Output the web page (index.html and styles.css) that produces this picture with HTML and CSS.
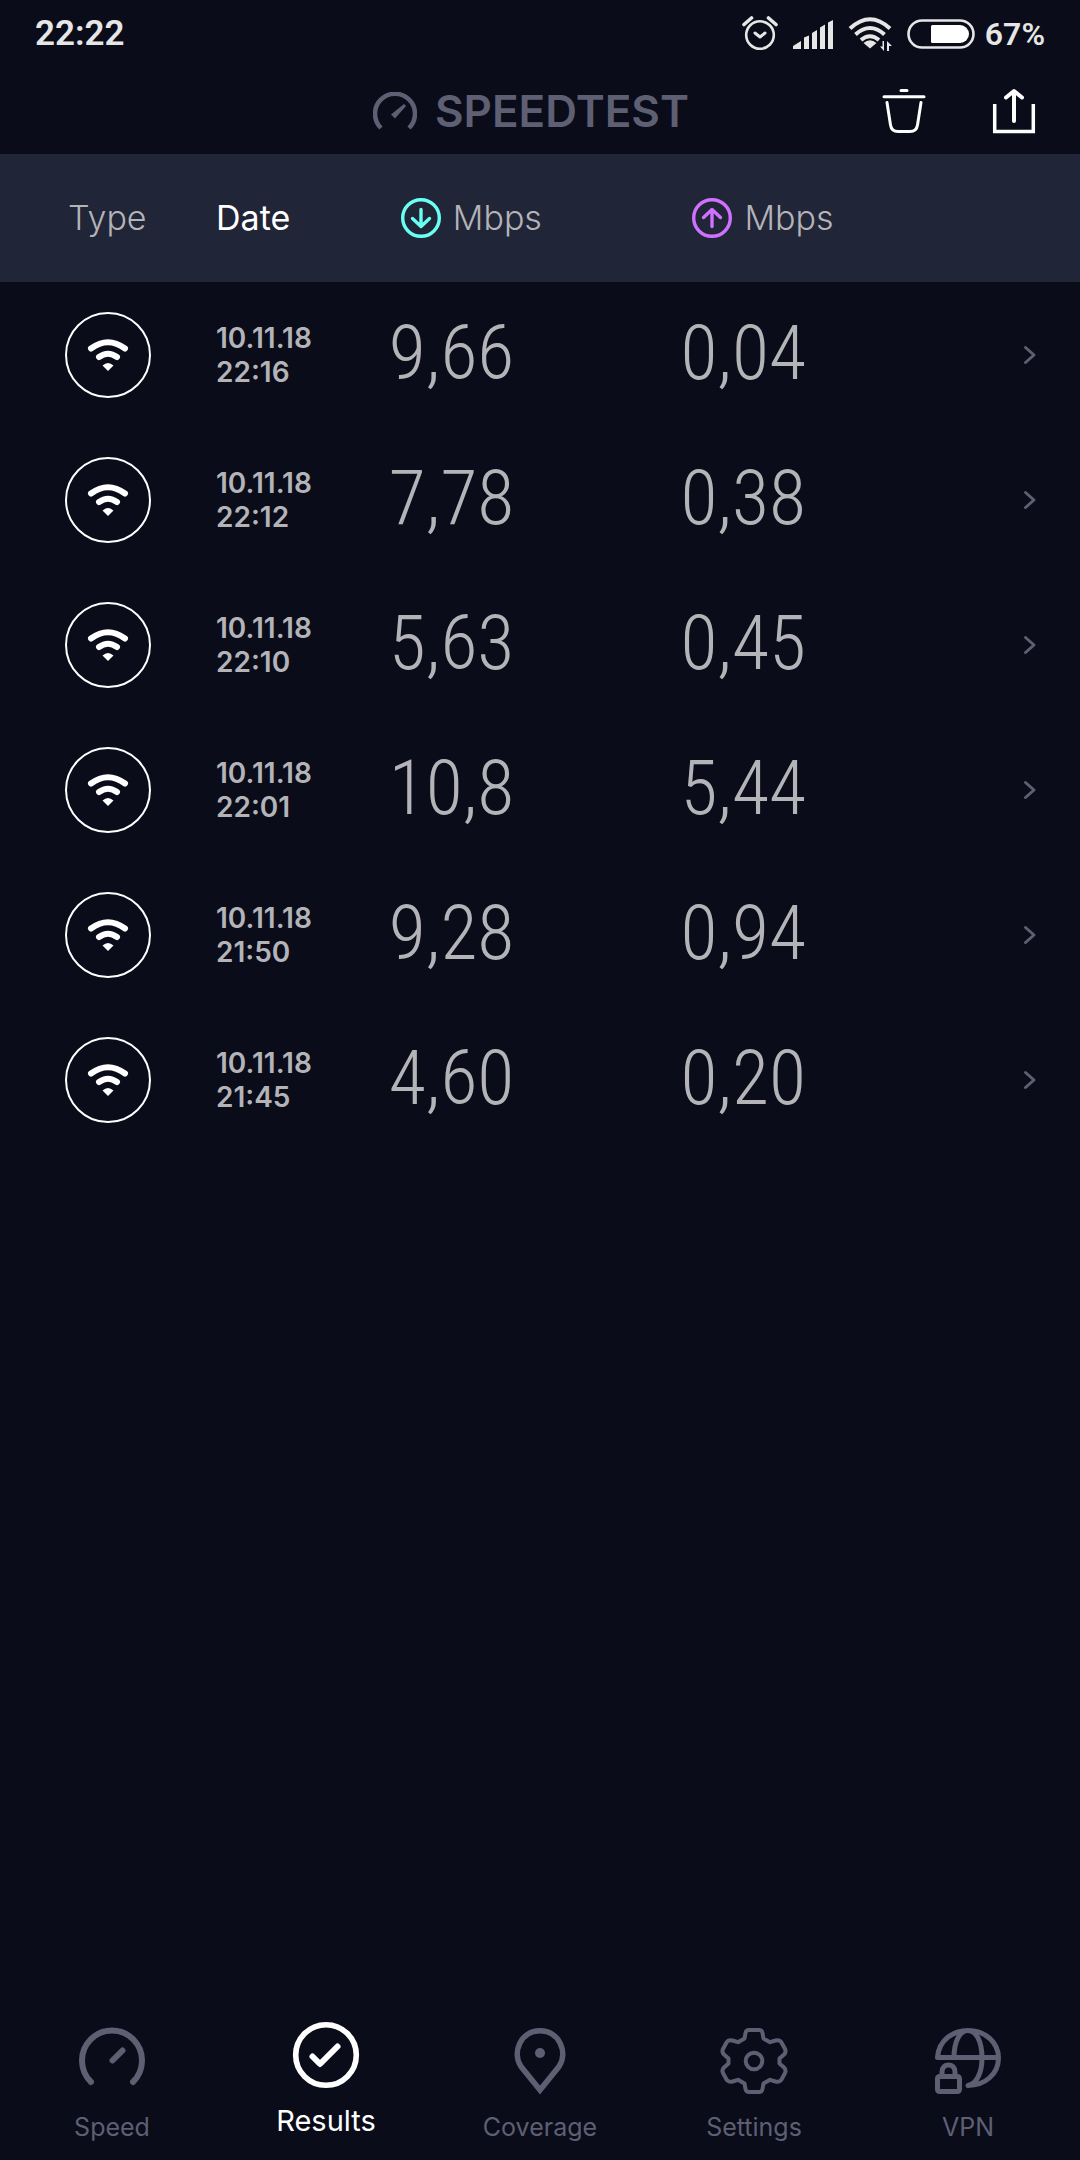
FILE: index.html
```html
<!DOCTYPE html>
<html lang="en">
<head>
<meta charset="utf-8">
<meta name="viewport" content="width=device-width, initial-scale=1">
<title>Speedtest – Results</title>
<link rel="stylesheet" href="styles.css">
</head>
<body>
<svg class="sprite" aria-hidden="true">
  <symbol id="wifi" viewBox="0 0 42 34">
    <path d="M4 10.500Q21-2 38 10.500" fill="none" stroke="currentColor" stroke-width="6" stroke-linecap="round"/>
    <path d="M12 19Q21 12.500 30 19" fill="none" stroke="currentColor" stroke-width="6" stroke-linecap="round"/>
    <path d="M15.500 27.500Q21 22.500 26.500 27.500L21 33Z" fill="currentColor"/>
  </symbol>
  <symbol id="chevron" viewBox="0 0 14 20">
    <path d="M2.500 2.500L11 10L2.500 17.500" fill="none" stroke="currentColor" stroke-width="3" stroke-linecap="round" stroke-linejoin="round"/>
  </symbol>
</svg>
<div class="app">
  <div class="status">
    <time class="clock">22:22</time>
    <div class="status-icons">
      <svg width="36" height="36" viewBox="0 0 36 36" fill="none" stroke="currentColor" stroke-linecap="round">
        <circle cx="18" cy="19" r="13.800" stroke-width="2.600"/>
        <path d="M13 17L18 21L23 17" stroke-width="3" stroke-linejoin="round"/>
        <path d="M2 8.500L9.500 2M34 8.500L26.500 2" stroke-width="3.600"/>
      </svg>
      <svg class="signal" width="42" height="32" viewBox="0 0 42 32" fill="currentColor">
        <path d="M1 31V28L9 23V31ZM12 31V19.500L17 17.500V31ZM20 31V15L25 12V31ZM28 31V9.500L33 6.500V31ZM36 31V4.500L41 2V31Z"/>
      </svg>
      <svg class="net" width="44" height="36" viewBox="0 0 44 36" fill="none" stroke="currentColor">
        <path d="M2 12.500Q22-6 42 12.500M7.500 18.500Q22 5.500 36.500 18.500M13 24Q22 16.500 31 24" stroke-width="4"/>
        <path d="M15.500 27Q22 21.500 28.500 27L22 32.500Z" fill="currentColor" stroke="none"/>
        <path d="M36 25V35L32 30.500H34.500V25ZM39 35V25L44 30H41V35Z" fill="currentColor" stroke="none"/>
      </svg>
      <svg class="battery" width="68" height="30" viewBox="0 0 68 30">
        <rect x="1.500" y="1.500" width="65" height="27" rx="13.500" fill="none" stroke="currentColor" stroke-width="2.600"/>
        <path d="M25.500 6H53A9 9 0 0 1 53 24H25.500Q24 24 24 22.500V7.500Q24 6 25.500 6Z" fill="#fff"/>
      </svg>
      <span class="percent">67%</span>
    </div>
  </div>

  <header class="topbar">
    <h1 class="logo">
      <svg width="44" height="38" viewBox="0 0 44 38" aria-hidden="true">
        <path d="M8 36A20 20 0 1 1 36 36" fill="none" stroke="currentColor" stroke-width="4.500"/>
        <path d="M31 12L33 14L22 26.500L18 22.500Z" fill="currentColor"/>
      </svg>
      <span>SPEEDTEST</span>
    </h1>
    <div class="actions">
      <button type="button" aria-label="Delete results">
        <svg width="44" height="46" viewBox="0 0 44 46" fill="none" stroke="currentColor" stroke-width="3" stroke-linecap="round">
          <path d="M19 2.500H25M2 8.700H42M5 14.500L8.500 37Q9.500 43.500 16 43.500H28Q34.500 43.500 35.500 37L39 14.500"/>
        </svg>
      </button>
      <button type="button" aria-label="Share results">
        <svg width="44" height="46" viewBox="0 0 44 46" fill="none" stroke="currentColor" stroke-width="3.500">
          <path d="M2.700 16V43.500H41.300V16"/>
          <path d="M22 33V3.500M14 9.500L22 3L30 9.500" stroke-width="4" stroke-linecap="round" stroke-linejoin="round"/>
        </svg>
      </button>
    </div>
  </header>

  <main>
    <table class="results">
      <colgroup><col class="c-type"><col class="c-date"><col class="c-rate"><col class="c-rate"><col></colgroup>
      <thead>
        <tr>
          <th class="type" scope="col">Type</th>
          <th class="sorted" scope="col">Date</th>
          <th scope="col"><span class="unit down">
            <svg width="40" height="40" viewBox="0 0 40 40" role="img" aria-label="Download"><circle cx="20" cy="20" r="18.300"/><path d="M20 11.500V28M11.500 20.500L20 28.500L28.500 20.500"/></svg>
            <span>Mbps</span></span></th>
          <th scope="col"><span class="unit up">
            <svg width="40" height="40" viewBox="0 0 40 40" role="img" aria-label="Upload"><circle cx="20" cy="20" r="18.300"/><path d="M20 28.500V12M11.500 19.500L20 11.500L28.500 19.500"/></svg>
            <span>Mbps</span></span></th>
          <td></td>
        </tr>
      </thead>
      <tbody>
        <tr><td><span class="badge"><svg role="img" aria-label="Wi-Fi"><use href="#wifi"/></svg></span></td><td class="date">10.11.18<br>22:16</td><td class="rate">9,66</td><td class="rate">0,04</td><td class="more"><button type="button" aria-label="Details"><svg><use href="#chevron"/></svg></button></td></tr>
        <tr><td><span class="badge"><svg role="img" aria-label="Wi-Fi"><use href="#wifi"/></svg></span></td><td class="date">10.11.18<br>22:12</td><td class="rate">7,78</td><td class="rate">0,38</td><td class="more"><button type="button" aria-label="Details"><svg><use href="#chevron"/></svg></button></td></tr>
        <tr><td><span class="badge"><svg role="img" aria-label="Wi-Fi"><use href="#wifi"/></svg></span></td><td class="date">10.11.18<br>22:10</td><td class="rate">5,63</td><td class="rate">0,45</td><td class="more"><button type="button" aria-label="Details"><svg><use href="#chevron"/></svg></button></td></tr>
        <tr><td><span class="badge"><svg role="img" aria-label="Wi-Fi"><use href="#wifi"/></svg></span></td><td class="date">10.11.18<br>22:01</td><td class="rate">10,8</td><td class="rate">5,44</td><td class="more"><button type="button" aria-label="Details"><svg><use href="#chevron"/></svg></button></td></tr>
        <tr><td><span class="badge"><svg role="img" aria-label="Wi-Fi"><use href="#wifi"/></svg></span></td><td class="date">10.11.18<br>21:50</td><td class="rate">9,28</td><td class="rate">0,94</td><td class="more"><button type="button" aria-label="Details"><svg><use href="#chevron"/></svg></button></td></tr>
        <tr><td><span class="badge"><svg role="img" aria-label="Wi-Fi"><use href="#wifi"/></svg></span></td><td class="date">10.11.18<br>21:45</td><td class="rate">4,60</td><td class="rate">0,20</td><td class="more"><button type="button" aria-label="Details"><svg><use href="#chevron"/></svg></button></td></tr>
      </tbody>
    </table>
  </main>

  <nav class="tabs" aria-label="Main">
    <a href="#speed">
      <svg width="68" height="68" viewBox="0 0 68 68"><path d="M13 55A30 30 0 1 1 55 55M34.500 33.500L44.500 23.500" stroke-width="6"/></svg>
      <span>Speed</span>
    </a>
    <a href="#results" class="active" aria-current="page">
      <svg width="68" height="68" viewBox="0 0 68 68"><circle cx="34" cy="34" r="30.300" stroke-width="5.600"/><path d="M20.500 35.500L28 43L45.500 25.500" stroke-width="6"/></svg>
      <span>Results</span>
    </a>
    <a href="#coverage">
      <svg width="68" height="68" viewBox="0 0 68 68"><path d="M34 63L15 39.500C6 26 14 3.800 34 3.800S62 26 53 39.500Z" stroke-width="5.600" stroke-linejoin="miter"/><circle cx="34" cy="26" r="5" fill="currentColor" stroke="none"/></svg>
      <span>Coverage</span>
    </a>
    <a href="#settings">
      <svg width="68" height="68" viewBox="0 0 68 68"><path d="M29 3H39Q42 3 42.500 6L43.500 11.500L50 15.200L55.500 13.500Q59.500 12.500 61.500 15.500L65 22Q66.500 25 64 27.500L59.500 31.500V36.500L64 40.500Q66.500 43 65 46L61.500 52.500Q59.500 55.500 55.500 54.500L50 52.800L43.500 56.500L42.500 62Q42 65 39 65H29Q26 65 25.500 62L24.500 56.500L18 52.800L12.500 54.500Q8.500 55.500 6.500 52.500L3 46Q1.500 43 4 40.500L8.500 36.500V31.500L4 27.500Q1.500 25 3 22L6.500 15.500Q8.500 12.500 12.500 13.500L18 15.200L24.500 11.500L25.500 6Q26 3 29 3Z" stroke-width="4"/><circle cx="34" cy="34" r="8.300" stroke-width="4"/></svg>
      <span>Settings</span>
    </a>
    <a href="#vpn">
      <svg width="68" height="68" viewBox="0 0 68 68"><path d="M3.500 30.500C5 12 20 3.500 34 3.500C52 3.500 64.500 16 64.500 31C64.500 47 51 58.500 34 58.500C43 57 48 45 48 31C48 14 42 3.500 34 3.500S20 14 20 30.500M3.500 30.500H64" stroke-width="5"/><rect x="3.500" y="49.500" width="22" height="15" rx="2" stroke-width="5"/><path d="M8 49V45C8 35.500 21 35.500 21 45V49" stroke-width="5"/></svg>
      <span>VPN</span>
    </a>
  </nav>
</div>
</body>
</html>
```
FILE: styles.css
```css
:root {
  --bg: #0a0c1a;
  --panel: #212538;
  --text: #b4b4b8;
  --muted: #5e5f73;
}

* { box-sizing: border-box; }

body {
  margin: 0;
  background: var(--bg);
  color: #fff;
  font-family: Inter, "Open Sans", sans-serif;
}

.sprite { position: absolute; width: 0; height: 0; }

svg { display: block; flex: none; }

button {
  padding: 0;
  border: 0;
  background: none;
  color: inherit;
  font: inherit;
}

.app {
  display: flex;
  flex-direction: column;
  min-height: 100vh;
}

main { flex: 1; }

.status {
  display: flex;
  justify-content: space-between;
  align-items: center;
  height: 68px;
  padding: 0 35px;
  color: #e6e6e6;
  font: 600 35px/40px Roboto, sans-serif;
}

.status-icons { display: flex; align-items: center; }
.signal { margin-left: 14px; }
.net { margin-left: 14px; }
.battery { margin-left: 15px; }
.percent { margin-left: 10px; font-size: 32px; }

.topbar {
  display: grid;
  grid-template-columns: 1fr auto 1fr;
  align-items: center;
  height: 86px;
  padding: 0 44px 0 26px;
}

.logo {
  grid-column: 2;
  display: flex;
  align-items: center;
  gap: 18px;
  margin: 0;
  color: var(--muted);
  font-size: 44px;
  font-weight: 600;
  line-height: 48px;
}

.actions {
  display: flex;
  justify-content: flex-end;
  gap: 66px;
}

.results {
  width: 100%;
  border-collapse: collapse;
  table-layout: fixed;
}

.c-type { width: 20%; }
.c-date { width: 16%; }
.c-rate { width: 27%; }

.results th, .results td { padding: 0; text-align: left; }

.results thead { background: var(--panel); }

.results th {
  height: 128px;
  color: var(--text);
  font-size: 34px;
  font-weight: 300;
  line-height: 40px;
}

.results .type { padding-left: 68px; }
.results .sorted { color: #fff; font-weight: 400; }

.unit {
  display: flex;
  align-items: center;
  gap: 12px;
  padding-left: 12px;
}

.unit svg {
  fill: none;
  stroke: currentColor;
  stroke-width: 3.4;
  stroke-linecap: round;
  stroke-linejoin: round;
}

.down svg { color: #6afff3; }
.up svg { color: #cf70ff; }

.results tbody tr { height: 145px; }

.badge {
  display: flex;
  align-items: center;
  justify-content: center;
  width: 86px;
  height: 86px;
  margin: 0 auto;
  border: 2px solid #fff;
  border-radius: 50%;
}

.badge svg { width: 42px; height: 34px; }

.date {
  color: var(--text);
  font-size: 28px;
  font-weight: 600;
  line-height: 34px;
}

.rate {
  color: var(--text);
  font: 300 76px/96px "Roboto Condensed", "Liberation Sans Narrow", Roboto, sans-serif;
}

.results .rate { padding-bottom: 4px; }

.more svg { width: 14px; height: 20px; color: var(--muted); }
.results .more { padding-right: 43px; }
.more button { display: block; margin-left: auto; }

.tabs {
  display: grid;
  grid-template-columns: repeat(5, 1fr);
  padding: 0 5px 15px;
}

.tabs a {
  display: flex;
  flex-direction: column;
  align-items: center;
  gap: 14px;
  padding-top: 6px;
  color: var(--muted);
  font-size: 25px;
  line-height: 36px;
  text-decoration: none;
}

.tabs svg {
  fill: none;
  stroke: currentColor;
  stroke-linecap: round;
  stroke-linejoin: round;
}

.tabs .active {
  padding-top: 0;
  color: #fff;
  font-size: 29px;
}
```
